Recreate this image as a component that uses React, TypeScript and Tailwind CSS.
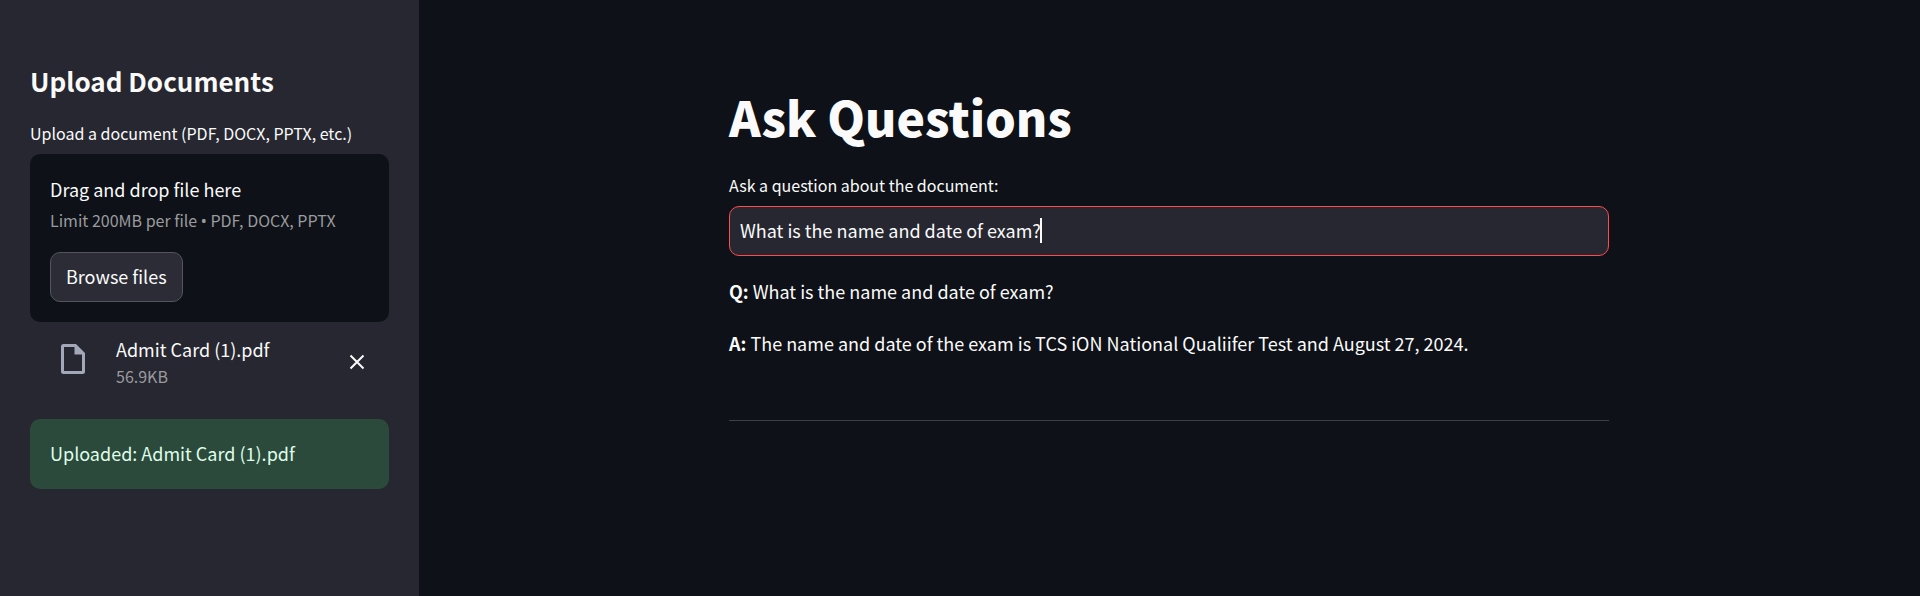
import { useRef, useState } from "react";

function FileIcon() {
  return (
    <svg viewBox="0 0 24 30" className="mb-[2px] h-[30px] w-6" aria-hidden="true">
      <path
        fill="#a3a8b8"
        fillRule="evenodd"
        d="M2.5 0H15L24 9V27.5Q24 30 21.500 30H2.500Q0 30 0 27.500V2.500Q0 0 2.500 0ZM3 3V27H21V10.500H13.500V3Z"
      />
    </svg>
  );
}

function CloseIcon() {
  return (
    <svg viewBox="0 0 16 16" className="size-4" aria-hidden="true">
      <path d="M1.500 1.500L14.500 14.500M14.500 1.500L1.500 14.500" stroke="#fafafa" strokeWidth="2" fill="none" />
    </svg>
  );
}

function Sidebar() {
  const picker = useRef<HTMLInputElement>(null);
  return (
    <aside className="w-[419px] shrink-0 bg-[#262730] px-[30px] pt-[59px]">
      <h2 className="text-[26px] leading-[44px] font-bold">Upload Documents</h2>
      <label htmlFor="document" className="mt-4 block text-base leading-7">
        Upload a document (PDF, DOCX, PPTX, etc.)
      </label>
      <section className="mt-[7px] rounded-[10px] bg-[#0e1117] px-5 pt-[19px] pb-5">
        <p className="text-lg leading-8">Drag and drop file here</p>
        <p className="mt-px text-base leading-7 text-[#9a9b9e]">
          Limit 200MB per file <span className="font-['Noto_Sans',sans-serif] leading-none">•</span> PDF, DOCX, PPTX
        </p>
        <input ref={picker} id="document" type="file" accept=".pdf,.docx,.pptx" className="hidden" />
        <button
          type="button"
          onClick={() => picker.current?.click()}
          className="mt-[18px] flex h-[50px] items-center rounded-[10px] border border-[#53545c] bg-[#2b2c36] px-[15px] pb-[2px] text-lg"
        >
          Browse files
        </button>
      </section>
      <div className="mt-[11px] flex items-center pr-6 pl-[31px]">
        <FileIcon />
        <div className="ml-[31px] flex-1">
          <p className="text-lg leading-8">Admit Card (1).pdf</p>
          <p className="text-base leading-[22px] text-[#9a9b9e]">56.9KB</p>
        </div>
        <button type="button" aria-label="Remove file" className="mt-1">
          <CloseIcon />
        </button>
      </div>
      <div role="alert" className="mt-8 rounded-[10px] bg-[#2b4a3b] px-5 pt-[18px] pb-5 text-lg leading-8 text-[#dffde9]">
        Uploaded: Admit Card (1).pdf
      </div>
    </aside>
  );
}

export default function App() {
  const [question, setQuestion] = useState("What is the name and date of exam?");
  return (
    <div className="flex min-h-screen bg-[#0e1117] font-['Noto_Sans_CJK_SC',sans-serif] text-[#fafafa]">
      <Sidebar />
      <main className="flex flex-1 justify-center pt-[82px] pr-[21px] pl-5">
        <div className="w-full max-w-[880px]">
          <h1 className="text-5xl leading-[68px] font-black">Ask Questions</h1>
          <label htmlFor="question" className="mt-[21px] block text-base leading-7">
            Ask a question about the document:
          </label>
          <div className="relative mt-[7px]">
            <input
              id="question"
              type="text"
              value={question}
              onChange={(e) => setQuestion(e.target.value)}
              className="block h-[50px] w-full rounded-[10px] border border-[#ff4b4b] bg-[#262730] px-[10px] pb-[2px] text-lg outline-none"
            />
            <span className="absolute top-3 left-[311px] h-[25px] w-[2px] bg-[#fafafa]" />
          </div>
          <p className="mt-[19px] text-lg leading-8">
            <strong className="font-bold">Q:</strong> What is the name and date of exam?
          </p>
          <p className="mt-5 text-lg leading-8">
            <strong className="font-bold">A:</strong> The name and date of the exam is TCS iON National Qualiifer Test and
            August 27, 2024.
          </p>
          <hr className="mt-[61px] border-[#3e4046]" />
        </div>
      </main>
    </div>
  );
}
